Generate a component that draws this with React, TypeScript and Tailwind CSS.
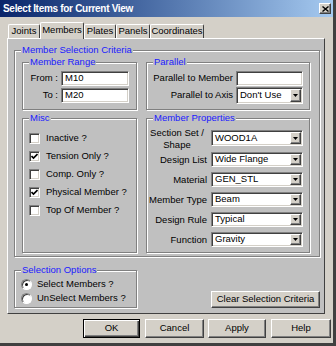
import React from "react";

const sunken =
  "border border-t-[#808080] border-l-[#808080] border-b-white border-r-white shadow-[inset_1px_1px_0_#404040,inset_-1px_-1px_0_#d4d0c8]";
const raised =
  "border border-t-white border-l-white border-b-[#404040] border-r-[#404040] shadow-[inset_-1px_-1px_0_#808080]";

function Group({
  title,
  className = "",
  children,
}: {
  title: string;
  className?: string;
  children?: React.ReactNode;
}) {
  return (
    <fieldset
      className={`border border-[#808080] shadow-[inset_1px_1px_0_#fff,1px_1px_0_#fff] min-w-0 ${className}`}
    >
      <legend className="ml-[6px] px-[1px] leading-[12px] text-[#1a1aff] bg-[#c0c0c0]">
        {title}
      </legend>
      {children}
    </fieldset>
  );
}

function Arrow() {
  return (
    <span className={`w-[11px] h-full shrink-0 bg-[#d4d0c8] flex items-center justify-center ${raised}`}>
      <svg width="5" height="3" viewBox="0 0 5 3">
        <path d="M0 0H5L2.5 3Z" fill="#000" />
      </svg>
    </span>
  );
}

function Field({ value, className = "", select }: { value: string; className?: string; select?: boolean }) {
  return (
    <div className={`flex items-stretch bg-white p-[1px] ${sunken} ${className}`}>
      <span className="flex-1 pl-[2px] flex items-center whitespace-nowrap overflow-hidden">{value}</span>
      {select && <Arrow />}
    </div>
  );
}

function Check({ label, checked }: { label: string; checked?: boolean }) {
  return (
    <div className="flex items-center h-[18px]">
      <span className={`w-[11px] h-[11px] bg-white flex items-center justify-center ${sunken}`}>
        {checked && (
          <svg width="7" height="7" viewBox="0 0 7 7">
            <path d="M0.5 3 L2.5 5 L6.5 1" stroke="#000" strokeWidth="1.7" fill="none" />
          </svg>
        )}
      </span>
      <span className="ml-[6px]">{label}</span>
    </div>
  );
}

function Radio({ label, checked }: { label: string; checked?: boolean }) {
  return (
    <div className="flex items-center h-[14px]">
      <span
        className={`w-[11px] h-[11px] rounded-full bg-white flex items-center justify-center border border-t-[#808080] border-l-[#808080] border-b-white border-r-white shadow-[inset_1px_1px_0_#404040]`}
      >
        {checked && <span className="w-[3px] h-[3px] rounded-full bg-black" />}
      </span>
      <span className="ml-[5px]">{label}</span>
    </div>
  );
}

function Btn({ children, className = "", def }: { children: React.ReactNode; className?: string; def?: boolean }) {
  return (
    <div
      className={`flex items-center justify-center bg-[#d4d0c8] ${
        def
          ? "border border-black shadow-[inset_1px_1px_0_#fff,inset_-1px_-1px_0_#404040,inset_-2px_-2px_0_#808080]"
          : raised
      } ${className}`}
    >
      {children}
    </div>
  );
}

function Tab({ label, className = "", active }: { label: string; className?: string; active?: boolean }) {
  return (
    <div
      className={`flex items-center justify-center bg-[#d4d0c8] border-t border-l border-r border-t-white border-l-white border-r-[#404040] rounded-t-[2px] ${
        active ? "h-[17px] -mb-[1px] relative z-10 pb-[2px]" : "h-[14px]"
      } ${className}`}
    >
      {label}
    </div>
  );
}

const PROPS = [
  { label: "Design List", value: "Wide Flange" },
  { label: "Material", value: "GEN_STL" },
  { label: "Member Type", value: "Beam" },
  { label: "Design Rule", value: "Typical" },
  { label: "Function", value: "Gravity" },
];

export default function App() {
  return (
    <div className="w-[336px] h-[346px] bg-[#d4d0c8] font-['Liberation_Sans',Arial,sans-serif] text-[9.5px] text-black border-r-[3px] border-b-[3px] border-r-[#404040] border-b-[#404040] overflow-hidden">
      {/* title bar */}
      <div className="h-[17px] flex items-center justify-between bg-linear-to-r from-[#0a246a] to-[#a6caf0]">
        <span className="pl-[3px] text-white font-bold text-[10px] tracking-[-0.3px]">
          Select Items for Current View
        </span>
        <span className={`w-[12px] h-[11px] mr-[2px] bg-[#d4d0c8] flex items-center justify-center ${raised}`}>
          <svg width="7" height="6" viewBox="0 0 7 6">
            <path d="M0.5 0.5 L6.5 5.5 M6.5 0.5 L0.5 5.5" stroke="#000" strokeWidth="1.4" />
          </svg>
        </span>
      </div>

      {/* tabs */}
      <div className="flex items-end h-[16px] mt-[5px] pl-[8px]">
        <Tab label="Joints" className="w-[32px]" />
        <Tab label="Members" className="w-[44px]" active />
        <Tab label="Plates" className="w-[32px]" />
        <Tab label="Panels" className="w-[34px]" />
        <Tab label="Coordinates" className="w-[54px]" />
      </div>

      {/* tab panel */}
      <div className="ml-[7px] w-[318px] h-[276px] bg-[#c0c0c0] border border-t-white border-l-white border-r-[#404040] border-b-[#404040] flex flex-col">
        <Group title="Member Selection Criteria" className="ml-[6px] mt-[5px] w-[306px] h-[213px]">
          <div className="flex pl-[7px] gap-[9px]">
            <Group title="Member Range" className="w-[115px] h-[54px]">
              <div className="flex flex-col gap-[2px] mt-[3px]">
                <div className="flex items-center">
                  <span className="w-[35px] text-right">From :</span>
                  <Field value="M10" className="ml-[3px] w-[68px] h-[15px]" />
                </div>
                <div className="flex items-center">
                  <span className="w-[35px] text-right">To :</span>
                  <Field value="M20" className="ml-[3px] w-[68px] h-[15px]" />
                </div>
              </div>
            </Group>
            <Group title="Parallel" className="w-[164px] h-[54px]">
              <div className="flex flex-col gap-[1px] mt-[3px]">
                <div className="flex items-center">
                  <span className="w-[86px] text-right">Parallel to Member</span>
                  <Field value="" className="ml-[3px] w-[67px] h-[15px]" />
                </div>
                <div className="flex items-center">
                  <span className="w-[86px] text-right">Parallel to Axis</span>
                  <Field value="Don't Use" select className="ml-[3px] w-[67px] h-[17px]" />
                </div>
              </div>
            </Group>
          </div>

          <div className="flex pl-[7px] gap-[9px] mt-[2px]">
            <Group title="Misc" className="w-[115px] h-[141px]">
              <div className="flex flex-col mt-[5px] pl-[6px]">
                <Check label="Inactive ?" />
                <Check label="Tension Only ?" checked />
                <Check label="Comp. Only ?" />
                <Check label="Physical Member ?" checked />
                <Check label="Top Of Member ?" />
              </div>
            </Group>
            <Group title="Member Properties" className="w-[164px] h-[141px]">
              <div className="flex flex-col mt-[6px]">
                <div className="flex items-start h-[22px]">
                  <span className="w-[60px] text-center leading-[12px] -mt-[3px]">
                    Section Set /<br />
                    Shape
                  </span>
                  <Field value="WOOD1A" select className="ml-[4px] w-[92px] h-[16px]" />
                </div>
                {PROPS.map((p) => (
                  <div key={p.label} className="flex items-start h-[20px]">
                    <span className="w-[60px] text-right leading-[15px]">{p.label}</span>
                    <Field value={p.value} select className="ml-[4px] w-[92px] h-[15px]" />
                  </div>
                ))}
              </div>
            </Group>
          </div>
        </Group>

        <div className="flex items-end justify-between ml-[6px] mt-[7px] w-[306px]">
          <Group title="Selection Options" className="w-[123px] h-[44px]">
            <div className="flex flex-col mt-[1px] pl-[6px]">
              <Radio label="Select Members ?" checked />
              <Radio label="UnSelect Members ?" />
            </div>
          </Group>
          <Btn className="w-[109px] h-[17px]">Clear Selection Criteria</Btn>
        </div>
      </div>

      {/* dialog buttons */}
      <div className="flex mt-[5px] pl-[83px]">
        <Btn def className="w-[57px] h-[19px]">OK</Btn>
        <Btn className="w-[59px] h-[19px] ml-[5px]">Cancel</Btn>
        <Btn className="w-[58px] h-[19px] ml-[4px]">Apply</Btn>
        <Btn className="w-[60px] h-[19px] ml-[5px]">Help</Btn>
      </div>
    </div>
  );
}
